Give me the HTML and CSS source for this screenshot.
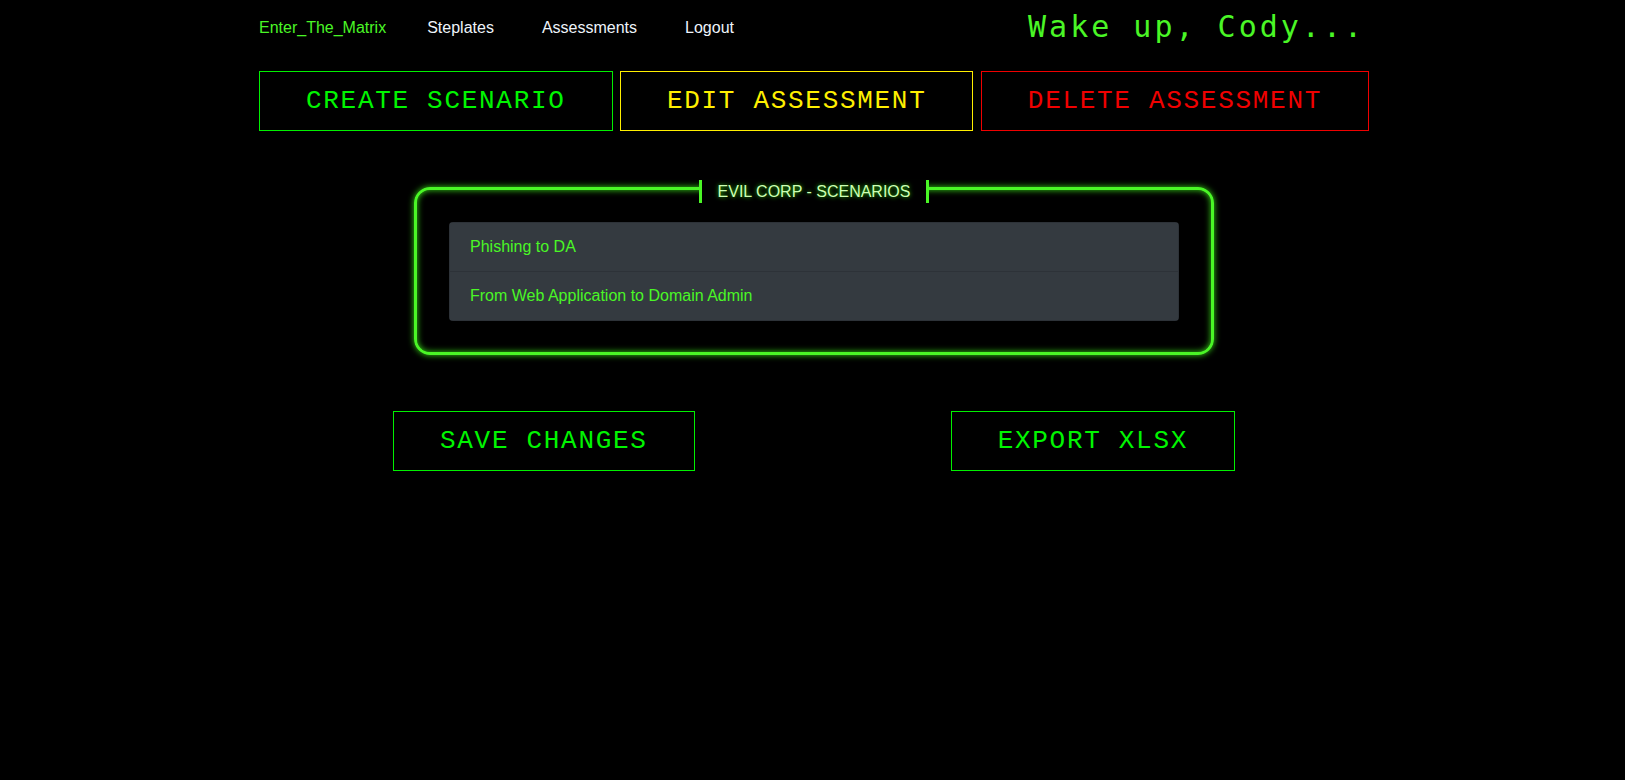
FILE: index.html
```html
<!DOCTYPE html>
<html lang="en">
<head>
<meta charset="utf-8">
<title>Evil Corp - Scenarios</title>
<link rel="stylesheet" href="styles.css">
</head>
<body>
<div class="container">
  <header class="topbar">
    <nav class="nav">
      <a class="brand" href="#">Enter_The_Matrix</a>
      <a class="nav-link" href="#">Steplates</a>
      <a class="nav-link" href="#">Assessments</a>
      <a class="nav-link" href="#">Logout</a>
    </nav>
    <div class="wake">Wake up, Cody...</div>
  </header>

  <div class="actions">
    <button class="btn btn-green">CREATE SCENARIO</button>
    <button class="btn btn-yellow">EDIT ASSESSMENT</button>
    <button class="btn btn-red">DELETE ASSESSMENT</button>
  </div>

  <fieldset class="panel">
    <legend class="panel-legend"><span class="panel-title">EVIL CORP - SCENARIOS</span></legend>
    <ul class="list">
      <li class="list-item">Phishing to DA</li>
      <li class="list-item">From Web Application to Domain Admin</li>
    </ul>
  </fieldset>

  <div class="bottom-actions">
    <button class="btn btn-green">SAVE CHANGES</button>
    <button class="btn btn-green">EXPORT XLSX</button>
  </div>
</div>
</body>
</html>
```

FILE: styles.css
```css
html, body {
  margin: 0;
  padding: 0;
  background: #000;
}

body {
  font-family: "Liberation Sans", Arial, sans-serif;
  font-size: 16px;
  color: #fff;
}

.container {
  width: 1110px;
  padding-left: 3px;
  margin: 0 auto;
}

.topbar {
  display: flex;
  align-items: center;
  height: 52px;
}

.nav {
  display: flex;
  align-items: center;
  gap: 48px;
  margin-top: 3px;
}

.nav a {
  text-decoration: none;
  font-size: 16px;
  line-height: 24px;
}

.brand {
  color: #4af626;
  margin-right: -7px;
}

.nav-link {
  color: #eef4fb;
}

.wake {
  margin-left: auto;
  margin-right: 4px;
  margin-top: 2px;
  font-family: "DejaVu Sans Mono", monospace;
  font-size: 30px;
  letter-spacing: 3px;
  color: #4af626;
  line-height: 40px;
}

.actions {
  margin-top: 19px;
  display: flex;
  justify-content: space-between;
}

.btn {
  display: block;
  height: 60px;
  padding: 0 46px;
  background: #000;
  border: 1px solid;
  font-family: "Liberation Mono", "Courier New", monospace;
  font-size: 26px;
  letter-spacing: 1.7px;
  cursor: pointer;
}

.btn-green {
  color: #00f500;
  border-color: #00f000;
}

.btn-yellow {
  color: #ffef00;
  border-color: #ffef00;
}

.btn-red {
  color: #f00000;
  border-color: #f00000;
}

.panel {
  width: 800px;
  box-sizing: border-box;
  margin: 49px auto 0;
  padding: 25px 32px 31px;
  border: 3px solid #4af626;
  border-radius: 16px;
  box-shadow: 0 0 6px #36d616, inset 0 0 6px #36d616;
  min-inline-size: 0;
}

.panel-legend {
  display: flex;
  align-items: flex-start;
  height: 17px;
  margin: 0 auto;
  padding: 0;
}

.panel-title {
  display: block;
  flex: none;
  height: 23px;
  padding: 0 16px;
  border-left: 3px solid #4af626;
  border-right: 3px solid #4af626;
  line-height: 23px;
  font-size: 16px;
  color: #cdffb4;
  text-shadow: 0 0 4px #2fd20f;
  background: #000;
}

.list {
  list-style: none;
  margin: 0;
  padding: 0;
  border-radius: 4px;
  overflow: hidden;
}

.list-item {
  background: #343a40;
  color: #4af626;
  padding: 12px 20px;
  line-height: 24px;
  border: 1px solid rgba(0, 0, 0, 0.125);
}

.list-item + .list-item {
  border-top: 0;
}

.bottom-actions {
  margin-top: 56px;
  padding: 0 134px;
  display: flex;
  justify-content: space-between;
}
```
